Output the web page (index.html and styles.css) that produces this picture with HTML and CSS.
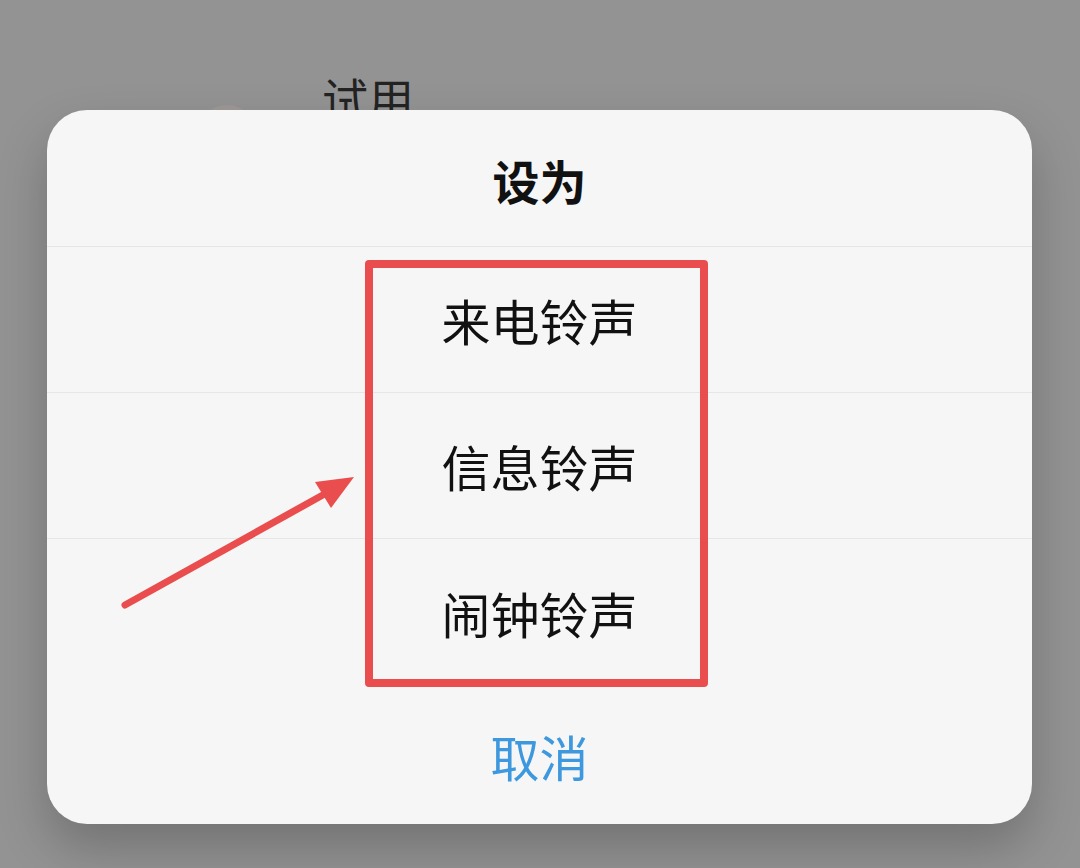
FILE: index.html
```html
<!doctype html>
<html>
	<head>
		<meta http-equiv="Content-Type" content="text/html;charset=UTF-8"/>
		<title>设为</title>
		<link rel="stylesheet" href="styles.css">
	</head>
<body>
	<div id="page">
		<div class="behind">
			<span class="avatar"></span>
			<span class="behind-title">试用</span>
		</div>
		<div id="dialog">
			<div class="head">设为</div>
			<div class="item">来电铃声</div>
			<div class="item">信息铃声</div>
			<div class="item">闹钟铃声</div>
			<div class="cancel">取消</div>
		</div>
		<!--标注：红框和箭头-->
		<div class="mark-box"></div>
		<svg class="mark-arrow" width="1080" height="868" viewBox="0 0 1080 868">
			<line x1="125" y1="605" x2="330" y2="491" stroke="#ea4d4d" stroke-width="7" stroke-linecap="round"/>
			<polygon points="354,477 315,482 331,508" fill="#ea4d4d"/>
		</svg>
	</div>
</body>
</html>
```
FILE: styles.css
```css
*{margin:0;padding:0;box-sizing:border-box;}
body{background:#939393;font-family:"Noto Sans CJK SC","Noto Sans",sans-serif;}
#page{width:1080px;height:868px;position:relative;overflow:hidden;padding-left:47px;}
.behind{height:110px;display:flex;align-items:flex-end;overflow:hidden;}
.avatar{width:60px;height:60px;border-radius:50%;background:#999392;margin:0 65px 0 150px;transform:translateY(55px);}
.behind-title{font-size:46px;color:#222;line-height:1;transform:translateY(10px);}
#dialog{width:985px;height:714px;background:#f6f6f6;border-radius:40px;display:flex;flex-direction:column;box-shadow:0 24px 50px rgba(0,0,0,.22);}
.head{height:137px;border-bottom:1px solid #e6e6e6;display:flex;align-items:center;justify-content:center;font-size:47px;font-weight:bold;color:#111;padding-top:2px;}
.item{height:146px;border-bottom:1px solid #e6e6e6;display:flex;align-items:center;justify-content:center;font-size:49px;color:#111;}
.item:nth-child(4){border-bottom:none;}
.cancel{flex:1;display:flex;align-items:center;justify-content:center;font-size:49px;color:#3d98dd;padding-top:2px;}
.mark-box{position:absolute;left:365px;top:260px;width:343px;height:427px;border:8px solid #ea4d4d;border-radius:4px;}
.mark-arrow{position:absolute;left:0;top:0;}
```
